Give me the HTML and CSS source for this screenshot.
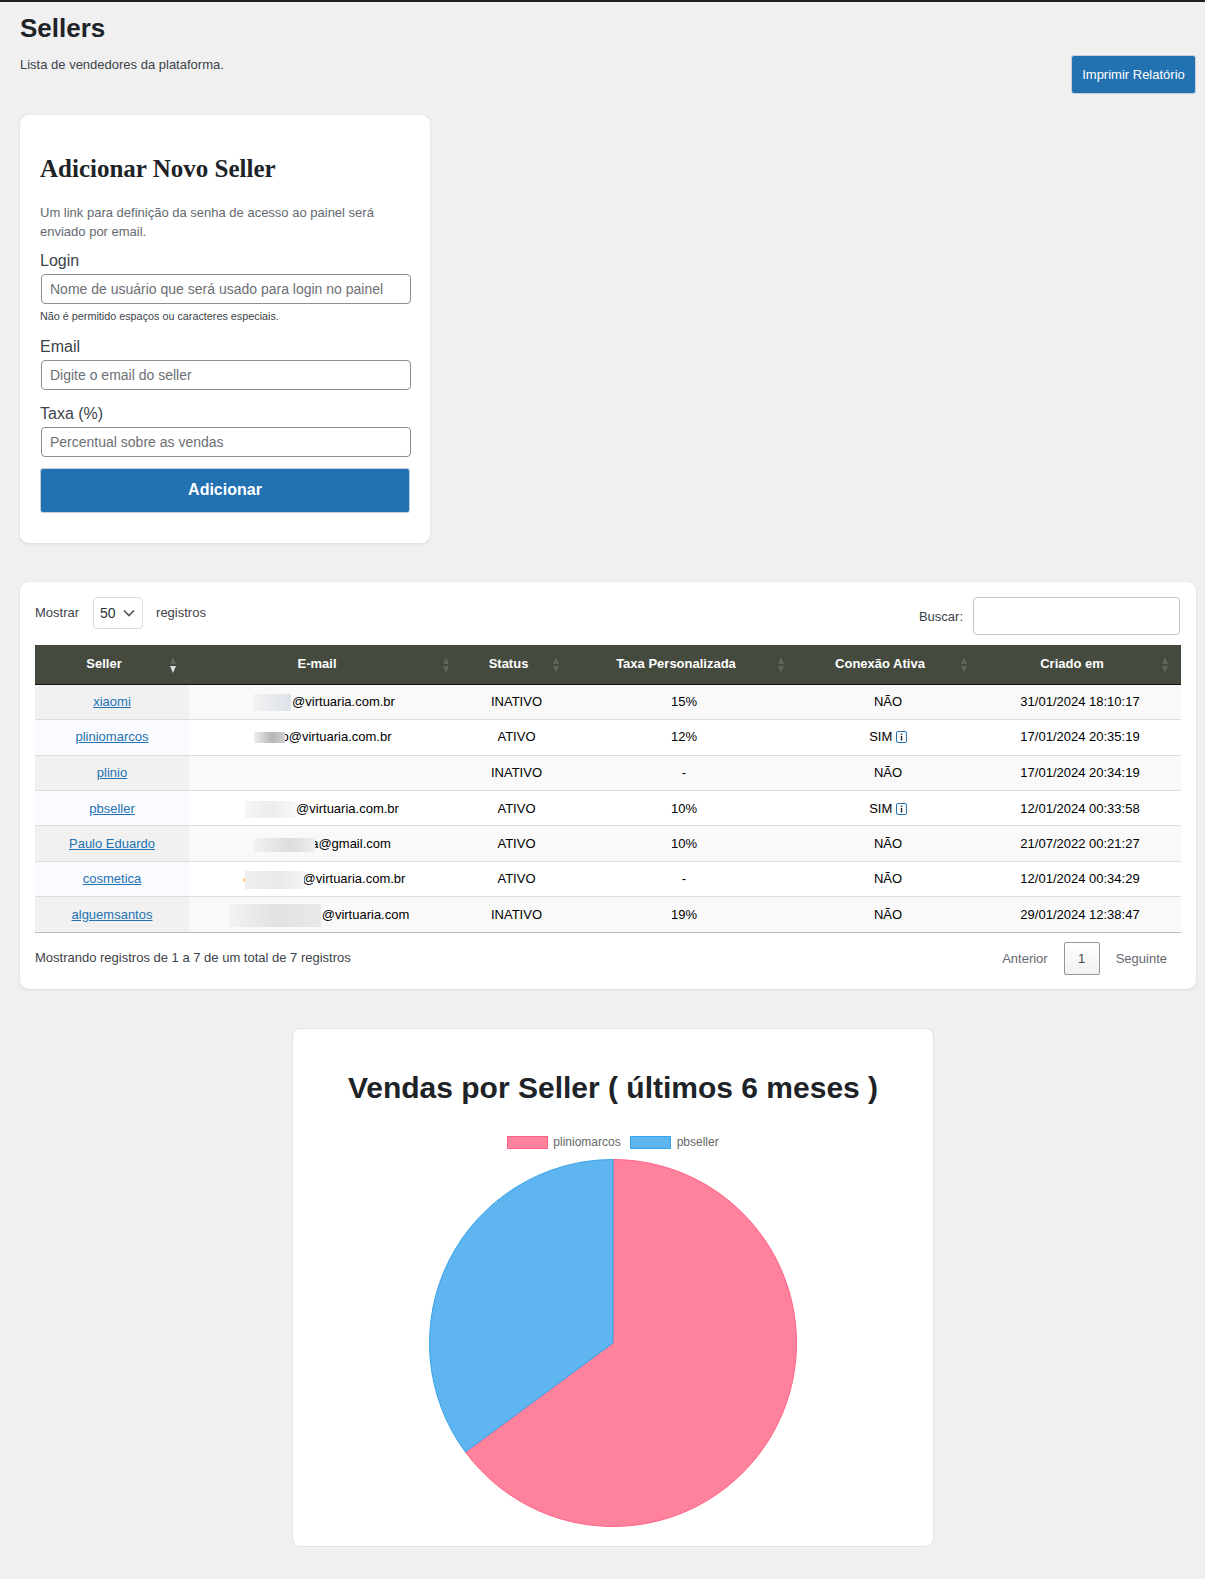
FILE: index.html
```html
<!DOCTYPE html>
<html lang="pt-BR">
<head>
<meta charset="utf-8">
<title>Sellers</title>
<link rel="stylesheet" href="styles.css">
</head>
<body>
<div class="page">
  <header class="page-head">
    <div class="head-text">
      <h1>Sellers</h1>
      <p>Lista de vendedores da plataforma.</p>
    </div>
    <button class="btn-print" type="button">Imprimir Relatório</button>
  </header>

  <section class="card form-card">
    <h2>Adicionar Novo Seller</h2>
    <p class="form-intro">Um link para definição da senha de acesso ao painel será enviado por email.</p>
    <form class="seller-form">
      <label class="fld-label" for="login">Login</label>
      <input class="fld-input" id="login" type="text" placeholder="Nome de usuário que será usado para login no painel">
      <small class="fld-hint">Não é permitido espaços ou caracteres especiais.</small>
      <label class="fld-label label-email" for="email">Email</label>
      <input class="fld-input" id="email" type="text" placeholder="Digite o email do seller">
      <label class="fld-label label-taxa" for="taxa">Taxa (%)</label>
      <input class="fld-input" id="taxa" type="text" placeholder="Percentual sobre as vendas">
      <button class="btn-add" type="button">Adicionar</button>
    </form>
  </section>

  <section class="card table-card">
    <div class="dt-top">
      <div class="dt-length">
        <span>Mostrar</span>
        <span class="dt-select">50
          <svg class="chev" width="14" height="8" viewBox="0 0 14 8"><path d="M2 1.5 7 6.5 12 1.5" fill="none" stroke="#50575e" stroke-width="1.7"/></svg>
        </span>
        <span>registros</span>
      </div>
      <div class="dt-filter">
        <label for="busca">Buscar:</label>
        <input id="busca" class="dt-search" type="search">
      </div>
    </div>

    <table class="dt">
      <colgroup>
        <col class="c1"><col class="c2"><col class="c3"><col class="c4"><col class="c5"><col class="c6">
      </colgroup>
      <thead>
        <tr>
          <th class="first sort-active">Seller</th>
          <th>E-mail</th>
          <th>Status</th>
          <th>Taxa Personalizada</th>
          <th>Conexão Ativa</th>
          <th>Criado em</th>
        </tr>
      </thead>
      <tbody>
        <tr>
          <td class="first"><a href="#">xiaomi</a></td>
          <td><span class="blur b1"></span>@virtuaria.com.br</td>
          <td>INATIVO</td><td>15%</td><td>NÃO</td><td>31/01/2024 18:10:17</td>
        </tr>
        <tr>
          <td class="first"><a href="#">pliniomarcos</a></td>
          <td><span class="blur b2"></span>o@virtuaria.com.br</td>
          <td>ATIVO</td><td>12%</td>
          <td>SIM <svg class="info" width="11" height="12" viewBox="0 0 11 12"><rect x=".5" y=".5" width="10" height="11" rx="1.5" fill="none" stroke="#2271b1"/><rect x="4.8" y="5" width="1.4" height="4.5" fill="#1d2327"/><rect x="4.8" y="2.6" width="1.4" height="1.4" fill="#1d2327"/></svg></td>
          <td>17/01/2024 20:35:19</td>
        </tr>
        <tr>
          <td class="first"><a href="#">plinio</a></td>
          <td></td>
          <td>INATIVO</td><td>-</td><td>NÃO</td><td>17/01/2024 20:34:19</td>
        </tr>
        <tr>
          <td class="first"><a href="#">pbseller</a></td>
          <td><span class="blur b4"></span>@virtuaria.com.br</td>
          <td>ATIVO</td><td>10%</td>
          <td>SIM <svg class="info" width="11" height="12" viewBox="0 0 11 12"><rect x=".5" y=".5" width="10" height="11" rx="1.5" fill="none" stroke="#2271b1"/><rect x="4.8" y="5" width="1.4" height="4.5" fill="#1d2327"/><rect x="4.8" y="2.6" width="1.4" height="1.4" fill="#1d2327"/></svg></td>
          <td>12/01/2024 00:33:58</td>
        </tr>
        <tr>
          <td class="first"><a href="#">Paulo Eduardo</a></td>
          <td><span class="blur b5"></span>a@gmail.com</td>
          <td>ATIVO</td><td>10%</td><td>NÃO</td><td>21/07/2022 00:21:27</td>
        </tr>
        <tr>
          <td class="first"><a href="#">cosmetica</a></td>
          <td><span class="blur b6"></span>@virtuaria.com.br</td>
          <td>ATIVO</td><td>-</td><td>NÃO</td><td>12/01/2024 00:34:29</td>
        </tr>
        <tr>
          <td class="first"><a href="#">alguemsantos</a></td>
          <td><span class="blur b7"></span>@virtuaria.com</td>
          <td>INATIVO</td><td>19%</td><td>NÃO</td><td>29/01/2024 12:38:47</td>
        </tr>
      </tbody>
    </table>

    <div class="dt-bottom">
      <div class="dt-info">Mostrando registros de 1 a 7 de um total de 7 registros</div>
      <div class="dt-pages">
        <span class="pg">Anterior</span>
        <span class="pg-cur">1</span>
        <span class="pg pg-next">Seguinte</span>
      </div>
    </div>
  </section>

  <section class="card chart-card">
    <h2 class="chart-title">Vendas por Seller ( últimos 6 meses )</h2>
    <div class="legend">
      <span class="lg-item"><i class="sw sw-pink"></i>pliniomarcos</span>
      <span class="lg-item"><i class="sw sw-blue"></i>pbseller</span>
    </div>
    <svg class="pie" width="368" height="368" viewBox="-184 -184 368 368">
      <path d="M0 0V-183.5A183.5 183.5 0 1 1 -147.6 109Z" fill="#ff829d" stroke="#ff6384" stroke-width="1"/>
      <path d="M0 0L-147.6 109A183.5 183.5 0 0 1 0 -183.5Z" fill="#5eb5ef" stroke="#36a2eb" stroke-width="1"/>
    </svg>
  </section>
</div>
</body>
</html>
```

FILE: styles.css
```css
* { box-sizing: border-box; }
html, body { margin: 0; padding: 0; }
body {
  background: #f0f0f1;
  color: #3c434a;
  font-family: "Liberation Sans", Arial, sans-serif;
  font-size: 13px;
  line-height: 19px;
  border-top: 2px solid #1d2327;
  min-height: 1579px;
}
.page { padding: 0 9px 29px 20px; }

.page-head { display: flex; justify-content: space-between; align-items: flex-start; height: 113px; }
.head-text h1 { margin: 9px 0 0; font-size: 26px; line-height: 34px; font-weight: 700; color: #1d2327; }
.head-text p { margin: 10px 0 0; font-size: 13px; line-height: 19px; color: #3c434a; }
.btn-print {
  margin-top: 53px; width: 125px; height: 39px; padding: 0 0 1px;
  background: #2271b1; color: #fff; border: 1px solid #c3d0db; border-radius: 3px;
  font: 13px "Liberation Sans", Arial, sans-serif;
}

.card { background: #fff; border: 1px solid #fff; border-radius: 8px; box-shadow: 0 1px 3px rgba(0,0,0,.08), 0 0 1px rgba(0,0,0,.12); }

.form-card { width: 410px; height: 428px; padding: 0 19px; }
.form-card h2 { margin: 38px 0 0; font: 700 25px/30px "Liberation Serif", "Times New Roman", serif; color: #1d2327; }
.form-intro { margin: 19px 0 0; color: #646970; line-height: 19px; }
.seller-form { display: flex; flex-direction: column; align-items: flex-start; }
.fld-label { font-size: 16px; line-height: 19px; color: #3c434a; margin-top: 10px; }
.label-email { margin-top: 14px; }
.label-taxa { margin-top: 14px; }
.fld-input {
  margin: 4px 0 0 1px; width: 370px; height: 30px; padding: 0 8px;
  border: 1px solid #8c8f94; border-radius: 4px; background: #fff;
  font: 14px "Liberation Sans", Arial, sans-serif; color: #2c3338;
}
.fld-input::placeholder { color: #6c7075; opacity: 1; }
.fld-hint { font-size: 10.8px; line-height: 14px; margin-top: 5px; color: #3c434a; }
.btn-add {
  margin-top: 11px; width: 370px; height: 45px; padding: 0 0 2px;
  background: #2271b1; color: #fff; border: 1px solid #c3d0db; border-radius: 3px;
  font: 700 16px "Liberation Sans", Arial, sans-serif;
}

.table-card { margin-top: 39px; width: 1176px; height: 407px; padding: 0 14px; }
.dt-top { display: flex; justify-content: space-between; align-items: flex-start; height: 62px; padding-top: 14px; }
.dt-length { display: flex; align-items: flex-start; }
.dt-length > span:first-child, .dt-length > span:last-child { margin-top: 6px; }
.dt-select {
  display: flex; align-items: center; justify-content: space-between;
  width: 50px; height: 32px; margin: 0 13px 0 14px; padding: 0 6px;
  border: 1px solid #dcdcde; border-radius: 4px; font-size: 14px; color: #2c3338;
}
.dt-filter { display: flex; align-items: flex-start; margin-right: 1px; }
.dt-filter label { margin: 10px 10px 0 0; }
.dt-search { width: 207px; height: 38px; border: 1px solid #c3c4c7; border-radius: 4px; background: #fff; padding: 0 8px; }

.dt { width: 1146px; border-collapse: separate; border-spacing: 0; table-layout: fixed; color: #000; }
.c1 { width: 154px; } .c2 { width: 273px; } .c3 { width: 110px; }
.c4 { width: 225px; } .c5 { width: 183px; } .c6 { width: 201px; }
.dt th {
  position: relative; height: 40px; padding: 0 27px 2px 10px;
  background: #454a3e; color: #fff; font-weight: 700; text-align: center;
  border-bottom: 1px solid #111;
}
.dt th.first { padding-right: 26px; }
.dt th::before, .dt th::after {
  content: ""; position: absolute; right: 13px; width: 0; height: 0;
  border-left: 3.5px solid transparent; border-right: 3.5px solid transparent;
}
.dt th::before { top: 12px; border-bottom: 7px solid #5f6558; }
.dt th::after { top: 21px; border-top: 7px solid #5f6558; }
.dt th.sort-active::after { border-top-color: #d8dfe2; }
.dt td { height: 35.36px; padding: 0 11px 0 10px; text-align: center; border-bottom: 1px solid #ddd; background: #fff; white-space: nowrap; }
.dt td.first { padding-right: 10px; }
.dt tbody tr:nth-child(-n+2) td { padding-bottom: 2px; }
.dt tbody tr:nth-child(odd) td { background: #f9f9f9; }
.dt tbody tr:nth-child(odd) td.first { background: #f1f1f1; }
.dt tbody tr:nth-child(even) td.first { background: #fafbff; }
.dt tbody tr:last-child td { border-bottom-color: #bbb; }
.dt a { color: #2271b1; }
.info { vertical-align: -2px; }

.blur { display: inline-block; vertical-align: middle; position: relative; }
.b1 { width: 38px; height: 17px; margin: 0 1px 0 -2px; background: linear-gradient(90deg, #f3f3f3, #dde1e8); }
.b2 { width: 31px; height: 11px; margin: 0 -4px 0 -4px; background: linear-gradient(90deg, #eee, #b5b5b5 60%, #d0d0d0); }
.b4 { width: 51px; height: 17px; margin-left: -6px; background: linear-gradient(90deg, #f6f6f6, #ececec 50%, #f8f8f8); }
.b5 { width: 61px; height: 14px; margin: 0 -4px 0 -5px; background: linear-gradient(90deg, #f2f2f2, #dcdcdc 60%, #efefef); }
.b6 { width: 61px; height: 18px; margin: 0 -1px 0 -2px; background: radial-gradient(circle at 1px 50%, #fdd88a 1.5px, transparent 2px), linear-gradient(90deg, transparent 2px, #efeeee 2px, #ebe9e9 60%, #f4f3f3); }
.b7 { width: 92px; height: 23px; margin: -4px 1px -4px -12px; background: linear-gradient(90deg, #f3f3f3, #e2e2e2 50%, #e8e8e8); }

.dt-bottom { display: flex; justify-content: space-between; align-items: flex-start; }
.dt-info { margin-top: 15px; }
.dt-pages { display: flex; align-items: center; margin-top: 9px; color: #646970; }
.pg { padding: 0 16px; }
.pg-next { padding-right: 14px; }
.pg-cur {
  display: flex; align-items: center; justify-content: center; width: 36px; height: 33px;
  border: 1px solid #979797; border-radius: 2px; color: #3c434a;
  background: linear-gradient(#fff, #f1f1f1);
}

.chart-card {
  margin: 39px 0 0 272px; width: 642px; height: 519px;
  display: flex; flex-direction: column; align-items: center; border-color: #e2e2e3;
  box-shadow: none;
}
.chart-title { margin: 41px 0 0; font-size: 30px; line-height: 36px; font-weight: 700; color: #1d2327; }
.legend { display: flex; gap: 9px; margin-top: 29px; height: 14px; font-size: 12px; line-height: 14px; color: #666; }
.lg-item { display: flex; align-items: center; }
.sw { display: block; width: 41px; height: 13px; margin-right: 6px; }
.sw-pink { background: #ff829d; border: 1px solid #ff6384; margin-right: 5px; }
.sw-blue { background: #5eb5ef; border: 1px solid #36a2eb; }
.pie { display: block; margin-top: 9.5px; }
```
